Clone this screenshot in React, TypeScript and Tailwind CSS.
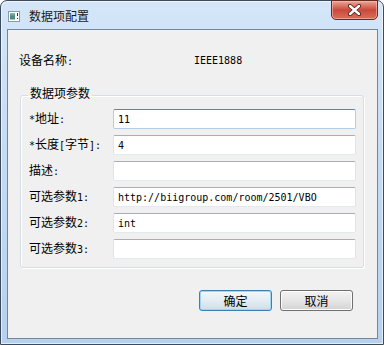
import React from "react";

const M = ({ children }: { children: React.ReactNode }) => (
  <span className="font-['DejaVu_Sans_Mono',monospace] text-[10px]">{children}</span>
);

const cjk = "font-['Noto_Sans_CJK_SC','Noto_Sans',sans-serif]";

type Row = { label: React.ReactNode; value: string; focus?: boolean };

const rows: Row[] = [
  { label: (<><M>*</M>地址<M>:</M></>), value: "11", focus: true },
  { label: (<><M>*</M>长度<M>[</M>字节<M>]:</M></>), value: "4" },
  { label: (<>描述<M>:</M></>), value: "" },
  { label: (<>可选参数<M>1:</M></>), value: "http://biigroup.com/room/2501/VBO" },
  { label: (<>可选参数<M>2:</M></>), value: "int" },
  { label: (<>可选参数<M>3:</M></>), value: "" },
];

function TitleIcon() {
  return (
    <svg width="12" height="11" viewBox="0 0 12 11">
      <rect x="0.5" y="0.5" width="11" height="10" fill="#ffffff" stroke="#8a9aa8" />
      <rect x="2" y="2.5" width="5" height="6" fill="#4f8a7a" />
      <rect x="2" y="2.5" width="5" height="2" fill="#6fa79a" />
      <rect x="9" y="2" width="1" height="3" fill="#333" />
      <rect x="9" y="7" width="1" height="1" fill="#333" />
    </svg>
  );
}

function CloseButton() {
  return (
    <div className="ml-auto mr-[5px] mt-[-1px] w-[47px] h-[20px] rounded-b-[5px] border border-[#6a2a22] bg-gradient-to-b from-[#e9a597] via-[#c9483a] to-[#d8705c] shadow-[inset_0_0_0_1px_rgba(255,200,190,0.55)] flex items-center justify-center">
      <svg width="13" height="12" viewBox="0 0 13 12">
        <path d="M2 2 L11 10 M11 2 L2 10" stroke="#5a1f1a" strokeWidth="4.2" strokeLinecap="round" />
        <path d="M2 2 L11 10 M11 2 L2 10" stroke="#ffffff" strokeWidth="2.4" strokeLinecap="round" />
      </svg>
    </div>
  );
}

export default function App() {
  return (
    <div className={`w-[384px] h-[345px] ${cjk} text-[12px] text-black`}>
      <div className="w-[384px] h-[345px] rounded-t-[7px] border border-[#3b4b5d] bg-gradient-to-b from-[#d4e6f8] via-[#c3daf2] to-[#b6d1ee] shadow-[inset_0_0_0_1px_rgba(255,255,255,0.6)] flex flex-col">
        <div className="h-[28px] flex items-start">
          <div className="flex items-center h-[16px] mt-[7px] pl-[7px] gap-[9px]">
            <TitleIcon />
            <span className="leading-[16px] text-[12px] text-[#1a1a1a]">数据项配置</span>
          </div>
          <CloseButton />
        </div>
        <div className="ml-[6px] mr-[5px] mb-[5px] flex-1 border border-[#73879b] bg-[#f0f0f0] flex flex-col">
          <div className="mt-[23px] pl-[11px] h-[16px] flex items-center leading-[16px]">
            <span className="w-[175px]">设备名称<M>:</M></span>
            <M>IEEE1888</M>
          </div>
          <fieldset className="mt-[18px] ml-[12px] mr-[13px] p-0 border border-[#d5dfe5] rounded-[3px] shadow-[inset_1px_1px_0_#ffffff,1px_1px_0_#ffffff]">
            <legend className="ml-[7px] px-[2px] pb-[4px] leading-[12px] text-[12px]">数据项参数</legend>
            <div className="pt-[6px] pb-[8px] pl-[8px] pr-[7px] flex flex-col gap-[6px]">
              {rows.map((r, i) => (
                <div key={i} className="flex items-center h-[20px]">
                  <span className="w-[84px] leading-[16px] whitespace-nowrap">{r.label}</span>
                  <div
                    className={
                      "flex-1 h-[20px] bg-white rounded-[2px] border pl-[4px] flex items-center " +
                      (r.focus
                        ? "border-[#b4cde6] border-t-[#5588b8]"
                        : "border-[#e2e3ea] border-t-[#abadb3] border-b-[#e3e9ef]")
                    }
                  >
                    <M>{r.value}</M>
                  </div>
                </div>
              ))}
            </div>
          </fieldset>
          <div className="mt-[22px] pr-[24px] flex justify-end gap-[8px]">
            <div className="w-[73px] h-[21px] rounded-[3px] border border-[#3c7fb1] bg-gradient-to-b from-[#f2f7fa] via-[#e3edf4] to-[#cfdde8] shadow-[inset_0_0_0_1px_#9fd6f5] flex items-center justify-center leading-[16px]">
              确定
            </div>
            <div className="w-[73px] h-[21px] rounded-[3px] border border-[#707070] bg-gradient-to-b from-[#f2f2f2] via-[#e6e6e6] to-[#d3d3d3] shadow-[inset_0_0_0_1px_#fcfcfc] flex items-center justify-center leading-[16px]">
              取消
            </div>
          </div>
        </div>
      </div>
    </div>
  );
}
